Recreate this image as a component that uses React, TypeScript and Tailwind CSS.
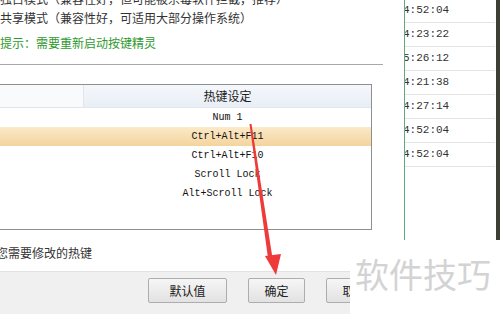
import React from "react";

const cjk = { fontFamily: '"Noto Sans CJK SC", "Noto Sans", sans-serif' };
const mono = { fontFamily: '"Liberation Mono", "DejaVu Sans Mono", monospace' };

const hotkeys = ["Num 1", "Ctrl+Alt+F11", "Ctrl+Alt+F10", "Scroll Lock", "Alt+Scroll Lock"];
const times = ["4:52:04", "4:23:22", "5:26:12", "4:21:38", "4:27:14", "4:52:04", "4:52:04"];

function Button({ label }: { label: string }) {
  return (
    <div
      className="h-[25px] flex items-center justify-center border border-[#adadad] bg-gradient-to-b from-[#f6f6f6] to-[#e2e2e2] text-[12px] text-[#222] rounded-[2px]"
      style={cjk}
    >
      {label}
    </div>
  );
}

function Dialog() {
  return (
    <div className="w-[383px] h-full flex flex-col shrink-0">
      <div className="text-[12px] text-[#333] leading-[17px] mt-[-10px]" style={cjk}>
        <div className="whitespace-nowrap">独占模式（兼容性好，但可能被杀毒软件拦截，推荐）</div>
        <div className="whitespace-nowrap mt-[2px]">共享模式（兼容性好，可适用大部分操作系统）</div>
        <div className="whitespace-nowrap text-[#2e9a2e] mt-[8px]">提示：需要重新启动按键精灵</div>
      </div>
      <div className="h-px bg-[#a8a8a8] mt-[13px]" />

      <div className="w-[372px] h-[146px] mt-[19px] border-t border-r border-b border-[#8f8f8f] bg-white flex flex-col">
        <div className="flex h-[23px] border-b border-[#e2e6ec]">
          <div className="w-[84px] bg-[#f9fafc] border-r border-[#e2e6ec]" />
          <div
            className="flex-1 flex items-center justify-center bg-gradient-to-b from-[#f4f7fb] to-[#e9eff7] text-[12px] text-[#222]"
            style={cjk}
          >
            热键设定
          </div>
        </div>
        {hotkeys.map((k, i) => (
          <div
            key={k}
            className={
              "h-[19px] flex items-center text-[10px] text-[#111] " +
              (i === 1 ? "bg-gradient-to-b from-[#fbe9c8] to-[#f3d49d]" : "")
            }
            style={mono}
          >
            <div className="w-[84px]" />
            <div className="flex-1 text-center whitespace-pre">{k}</div>
          </div>
        ))}
      </div>

      <div className="text-[12px] text-[#333] mt-[14px] ml-[-16px] whitespace-nowrap" style={cjk}>
        择您需要修改的热键
      </div>

      <div className="mt-auto h-[43px] w-[383px] bg-[#f0f0f0] border-t border-[#e2e2e2] flex items-start pt-[6px] gap-[21px] pl-[148px]">
        <div className="w-[83px]">
          <Button label="默认值" />
        </div>
        <div className="w-[60px]">
          <Button label="确定" />
        </div>
        <div className="w-[60px]">
          <Button label="取消" />
        </div>
      </div>
    </div>
  );
}

function TimeList() {
  return (
    <div className="ml-[21px] w-[91px] h-[240px] border-l border-[#5fa882] bg-white flex flex-col overflow-hidden">
      <div className="mt-[-1px]">
        {times.map((t, i) => (
          <div
            key={i}
            className="h-[24px] border-b border-[#e4e4e4] flex items-center text-[11px] text-[#333] ml-[-2px]"
            style={mono}
          >
            {t}
          </div>
        ))}
      </div>
    </div>
  );
}

export default function App() {
  return (
    <div className="relative w-[500px] h-[314px] overflow-hidden bg-white flex">
      <Dialog />
      <TimeList />
      <div className="w-[4px] h-[240px] bg-[#3b3f36] ml-auto" />

      <div className="absolute left-[350px] top-[240px] w-[150px] h-[74px] bg-white flex items-center">
        <span className="ml-[5px] mt-[-8px] text-[34px] text-[#d3d3d3]" style={cjk}>
          软件技巧
        </span>
      </div>

      <svg className="absolute left-0 top-0 pointer-events-none" width="500" height="314" viewBox="0 0 500 314">
        <polygon points="249.5,124 251.5,124 272.5,258 268,258" fill="#ef3a3a" />
        <polygon points="265,256 281,254 276,275" fill="#ef3a3a" />
      </svg>
    </div>
  );
}
